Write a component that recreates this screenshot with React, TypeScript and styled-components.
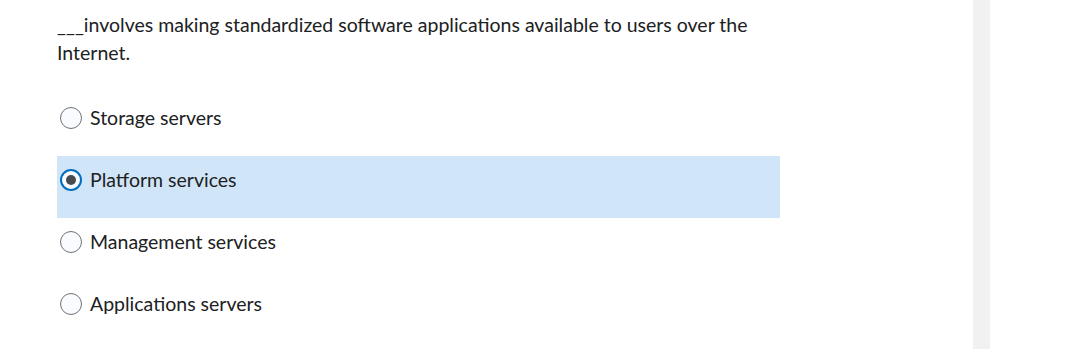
import React, { useState } from "react";
import styled, { createGlobalStyle } from "styled-components";

const GlobalStyle = createGlobalStyle`
  html, body {
    margin: 0;
    padding: 0;
    background: #ffffff;
  }
  body {
    font-family: Lato, "Noto Sans", sans-serif;
    color: #202122;
  }
`;

const options = [
  "Storage servers",
  "Platform services",
  "Management services",
  "Applications servers",
];

export default function App() {
  const [selected, setSelected] = useState(1);

  return (
    <>
      <GlobalStyle />
      <Page>
        <Main>
          <Question>
            ___involves making standardized software applications available to
            users over the Internet.
          </Question>
          <OptionList>
            {options.map((label, i) => (
              <Option
                key={label}
                $active={i === selected}
                onClick={() => setSelected(i)}
              >
                <Radio $checked={i === selected} />
                <OptionText>{label}</OptionText>
              </Option>
            ))}
          </OptionList>
        </Main>
        <Gutter />
        <Aside />
      </Page>
    </>
  );
}

const Page = styled.div`
  display: flex;
  height: 349px;
  overflow: hidden;
`;

const Main = styled.div`
  width: 973px;
  padding: 11px 0 0 57px;
  box-sizing: border-box;
`;

const Question = styled.p`
  margin: 0;
  width: 720px;
  font-size: 19.5px;
  line-height: 28px;
  color: #202122;
`;

const OptionList = styled.div`
  display: flex;
  flex-direction: column;
  margin-top: 27px;
  width: 723px;
`;

const Option = styled.label<{ $active?: boolean }>`
  display: flex;
  align-items: flex-start;
  gap: 8px;
  height: 62px;
  padding: 12px 0 0 3px;
  box-sizing: border-box;
  background: ${(p) => (p.$active ? "#d1e5f8" : "transparent")};
  cursor: pointer;
`;

const Radio = styled.span<{ $checked?: boolean }>`
  position: relative;
  flex: none;
  width: 22px;
  height: 22px;
  margin-top: 1px;
  border-radius: 50%;
  box-sizing: border-box;
  background: #f9fbff;
  border: ${(p) => (p.$checked ? "2px solid #006fbf" : "1px solid #6e7376")};

  &::after {
    content: "";
    display: ${(p) => (p.$checked ? "block" : "none")};
    position: absolute;
    left: 50%;
    top: 50%;
    width: 10px;
    height: 10px;
    margin: -5px 0 0 -5px;
    border-radius: 50%;
    background: #494c4e;
  }
`;

const OptionText = styled.span`
  font-size: 19.5px;
  line-height: 24px;
  color: #202122;
`;

const Gutter = styled.div`
  width: 17px;
  flex: none;
  background: #f1f1f1;
`;

const Aside = styled.div`
  flex: 1;
  background: #ffffff;
`;
